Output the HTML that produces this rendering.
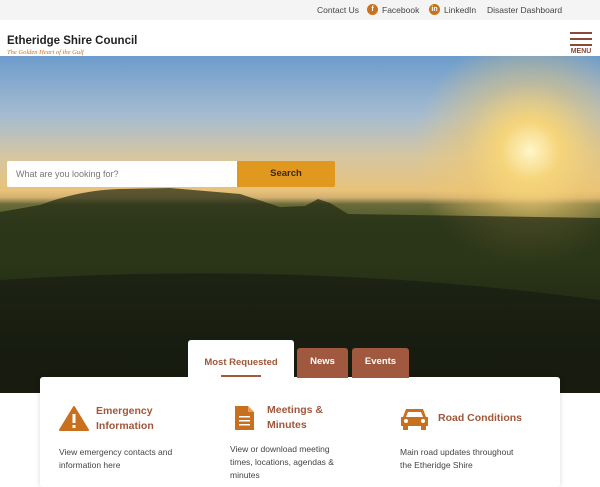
<!DOCTYPE html>
<html><head><meta charset="utf-8"><style>
*{margin:0;padding:0;box-sizing:border-box}
body{width:600px;height:480px;overflow:hidden;font-family:"Liberation Sans",sans-serif;background:#fff;position:relative}
.top{height:20px;background:#f4f4f4;font-size:8.5px;color:#444;position:relative}
.top span{position:absolute;top:5px}
.ci{position:absolute;top:4px;width:11px;height:11px;border-radius:50%;background:#c8731f;color:#fff;font-size:7px;font-weight:bold;text-align:center;line-height:11px}
.hdr{height:36px;position:relative;background:#fff}
.t1{position:absolute;left:7px;top:15px;font-size:11.5px;color:#222;font-weight:600}
.t2{position:absolute;left:7px;top:29px;font-size:6.5px;color:#c8731f;font-style:italic;font-family:"Liberation Serif",serif}
.menu{position:absolute;right:8px;top:12px;width:22px}
.menu i{display:block;height:2px;background:#8a4a3a;margin-bottom:4px}
.menu b{font-size:7px;color:#8a4a3a;display:block;margin-top:-2px;text-align:center}
.hero{position:absolute;top:56px;left:0;width:600px;height:337px;overflow:hidden;
background:linear-gradient(180deg,#6d9ccc 0%,#a7bcd0 18%,#d6c6a0 30%,#e8c27a 40%,#d2b070 42%,#6a6a3a 44%,#4a5828 50%,#465426 62%,#2e3618 75%,#181b10 88%,#14140f 100%)}
.sun{position:absolute;left:405px;top:-15px;width:250px;height:220px;background:radial-gradient(circle,#fff6c8 0%,#f5d47a 18%,rgba(240,200,110,.5) 40%,rgba(230,190,100,0) 70%)}
.search{position:absolute;left:7px;top:105px;width:230px;height:26px;background:#fff;border-radius:2px 0 0 2px;font-size:9px;color:#777;padding:8px 9px}
.sbtn{position:absolute;left:237px;top:105px;width:98px;height:26px;background:#e0981f;border-radius:0 2px 2px 0;font-size:9.5px;font-weight:bold;color:#3a2a10;text-align:center;line-height:26px}
.tab{position:absolute;font-size:9.5px;font-weight:bold;text-align:center;border-radius:3px 3px 0 0}
.card{position:absolute;left:40px;top:377px;width:520px;height:110px;background:#fff;border-radius:3px;box-shadow:0 0 6px rgba(0,0,0,.15)}
.it h3{position:absolute;font-size:10.5px;color:#a0573a;line-height:15px}
.it p{position:absolute;font-size:8.5px;color:#444;line-height:13px}
</style></head><body>
<div class="top">
<span style="left:317px">Contact Us</span>
<div class="ci" style="left:367px">f</div><span style="left:382px">Facebook</span>
<div class="ci" style="left:429px">in</div><span style="left:444px">LinkedIn</span>
<span style="left:487px">Disaster Dashboard</span>
</div>
<div class="hdr"><div class="t1">Etheridge Shire Council</div><div class="t2">The Golden Heart of the Gulf</div>
<div class="menu"><i></i><i></i><i></i><b>MENU</b></div></div>
<div class="hero">
<div class="sun"></div>
<svg width="600" height="393" style="position:absolute;left:0;top:-56px">
<path d="M0,212 L40,205 Q80,190 120,189 L170,188 L240,194 L280,207 L305,206 L318,199 L330,203 L348,214 L600,218 L600,393 L0,393Z" fill="#202812" opacity=".7"/>
<path d="M0,280 Q300,260 600,300 L600,393 L0,393Z" fill="#121410" opacity=".5"/>
</svg>
<div class="search">What are you looking for?</div>
<div class="sbtn">Search</div>
</div>
<div class="card"></div>
<div class="tab" style="left:188px;top:340px;width:106px;height:40px;background:#fff;color:#a0573a;padding-top:17px">Most Requested<div style="width:40px;height:2px;background:#a0573a;margin:7px auto 0"></div></div>
<div class="tab" style="left:297px;top:348px;width:51px;height:30px;background:#a0583e;color:#fff;line-height:28px">News</div>
<div class="tab" style="left:352px;top:348px;width:57px;height:30px;background:#a0583e;color:#fff;line-height:28px">Events</div>
<div class="it">
<svg style="position:absolute;left:59px;top:406px" width="30" height="25" viewBox="0 0 30 25"><path d="M15,1 L29,24 L1,24Z" fill="#c8701e" stroke="#c8701e" stroke-linejoin="round" stroke-width="2"/><rect x="13.5" y="8" width="3" height="9" fill="#fff"/><rect x="13.5" y="19" width="3" height="3" fill="#fff"/></svg>
<h3 style="left:96px;top:404px">Emergency<br>Information</h3>
<p style="left:59px;top:446px">View emergency contacts and<br>information here</p>
<svg style="position:absolute;left:234px;top:406px" width="21" height="25" viewBox="0 0 21 25"><path d="M1,0 L14,0 L20,6 L20,24 L1,24Z" fill="#c8701e"/><path d="M14,0 L14,6 L20,6" fill="#e8a060"/><rect x="5" y="10" width="11" height="1.5" fill="#fff"/><rect x="5" y="14" width="11" height="1.5" fill="#fff"/><rect x="5" y="18" width="11" height="1.5" fill="#fff"/></svg>
<h3 style="left:267px;top:403px">Meetings &amp;<br>Minutes</h3>
<p style="left:230px;top:443px">View or download meeting<br>times, locations, agendas &amp;<br>minutes</p>
<svg style="position:absolute;left:400px;top:407px" width="29" height="24" viewBox="0 0 29 24"><path d="M6,2 L23,2 L26,10 L28,10 L28,19 L1,19 L1,10 L3,10Z" fill="#c8701e"/><path d="M8,5 L21,5 L23,10 L6,10Z" fill="#fff"/><rect x="3" y="18" width="5" height="5" fill="#c8701e"/><rect x="21" y="18" width="5" height="5" fill="#c8701e"/><circle cx="6" cy="14" r="2" fill="#fff"/><circle cx="23" cy="14" r="2" fill="#fff"/></svg>
<h3 style="left:438px;top:411px">Road Conditions</h3>
<p style="left:400px;top:446px">Main road updates throughout<br>the Etheridge Shire</p>
</div>
</body></html>
